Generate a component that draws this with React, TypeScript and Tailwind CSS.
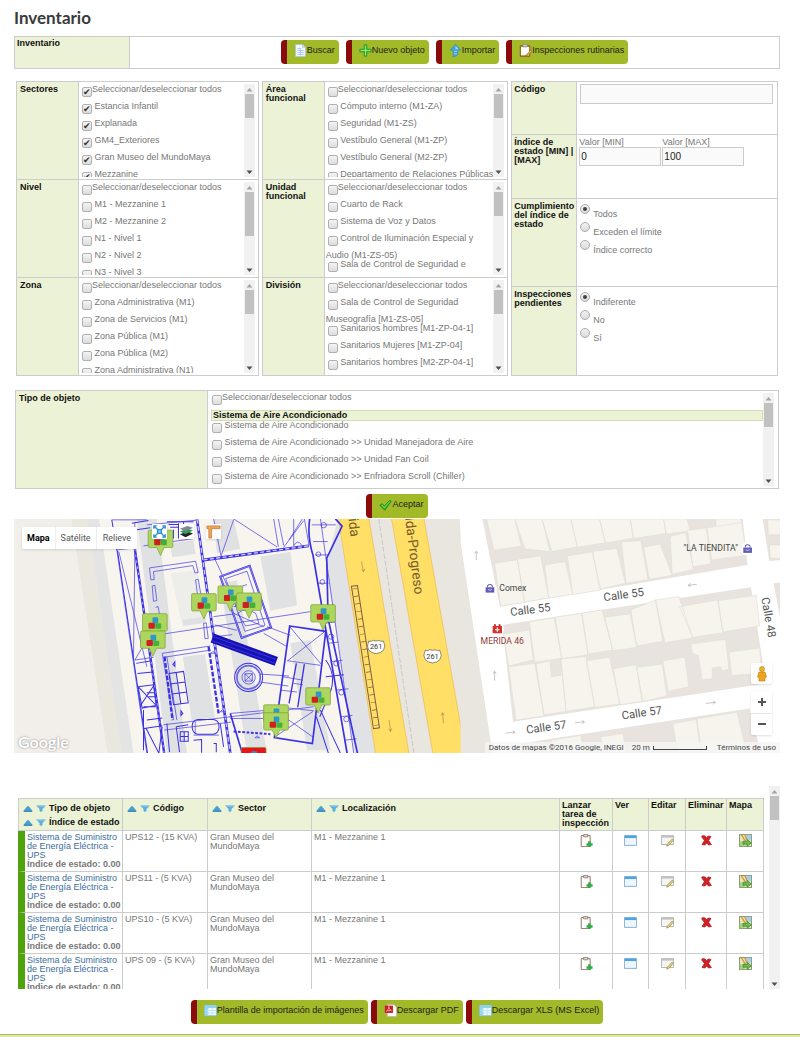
// src/pages/Inventario.tsx
import { ReactNode } from 'react';

interface FilterProps {
  name: string;
  title: string;
  items: string[];
  checked?: boolean;
  tallThumb?: boolean;
}

const leftFilters: FilterProps[] = [
  {
    name: 'sectores',
    title: 'Sectores',
    checked: true,
    items: ['Estancia Infantil', 'Explanada', 'GM4_Exteriores', 'Gran Museo del MundoMaya', 'Mezzanine'],
  },
  {
    name: 'nivel',
    title: 'Nivel',
    tallThumb: true,
    items: ['M1 - Mezzanine 1', 'M2 - Mezzanine 2', 'N1 - Nivel 1', 'N2 - Nivel 2', 'N3 - Nivel 3'],
  },
  {
    name: 'zona',
    title: 'Zona',
    items: [
      'Zona Administrativa (M1)',
      'Zona de Servicios (M1)',
      'Zona Pública (M1)',
      'Zona Pública (M2)',
      'Zona Administrativa (N1)',
    ],
  },
];

const middleFilters: FilterProps[] = [
  {
    name: 'area',
    title: 'Área funcional',
    items: [
      'Cómputo interno (M1-ZA)',
      'Seguridad (M1-ZS)',
      'Vestíbulo General (M1-ZP)',
      'Vestíbulo General (M2-ZP)',
      'Departamento de Relaciones Públicas',
    ],
  },
  {
    name: 'unidad',
    title: 'Unidad funcional',
    items: [
      'Cuarto de Rack',
      'Sistema de Voz y Datos',
      'Control de Iluminación Especial y Audio (M1-ZS-05)',
      'Sala de Control de Seguridad e',
    ],
  },
  {
    name: 'division',
    title: 'División',
    items: [
      'Sala de Control de Seguridad Museografía [M1-ZS-05]',
      'Sanitarios hombres [M1-ZP-04-1]',
      'Sanitarios Mujeres [M1-ZP-04]',
      'Sanitarios hombres [M2-ZP-04-1]',
    ],
  },
];

const tipos = [
  'Sistema de Aire Acondicionado',
  'Sistema de Aire Acondicionado >> Unidad Manejadora de Aire',
  'Sistema de Aire Acondicionado >> Unidad Fan Coil',
  'Sistema de Aire Acondicionado >> Enfriadora Scroll (Chiller)',
];

const codigos = ['UPS12 - (15 KVA)', 'UPS11 - (5 KVA)', 'UPS10 - (5 KVA)', 'UPS 09 - (5 KVA)'];

/* ---------- Iconos ---------- */

const Icon = ({ children }: { children: ReactNode }) => (
  <svg className="w-[13px] h-[13px] shrink-0" viewBox="0 0 16 16" aria-hidden="true">
    {children}
  </svg>
);

const PageIcon = () => (
  <Icon>
    <path d="M2 .5h8.500l3.500 3.500v11.500h-12z" fill="#f4f9ff" stroke="#a9c4e0" />
    <path d="M10.500.5v3.500h3.500" fill="#cfe2f5" stroke="#a9c4e0" />
    <path d="M4 5.500h5M4 8h8M4 10.500h8M4 13h8M8 6v8" stroke="#9fc3e6" />
  </Icon>
);

const PlusIcon = () => (
  <Icon>
    <path d="M6.500 1h3v5.500H15v3H9.500V15h-3V9.500H1v-3h5.500z" fill="#4fd04a" stroke="#1d8f22" />
    <path d="M8 2v12M2 8h12" stroke="#9bf08d" />
  </Icon>
);

const ImportIcon = () => (
  <Icon>
    <path d="M8 .5l6.500 7H11V11c0 2-1 3-3 4.500H4.500C6 13 5 12 5 10V7.500H1.500z" fill="#3fa4dd" stroke="#3f8fb8" />
    <path d="M8 2l4 4.500H8z" fill="#9bdcf8" />
    <path d="M6 9h4M6 12h4" stroke="#a8def2" />
  </Icon>
);

const ClipIcon = () => (
  <Icon>
    <path d="M1.500 2h12v13.500h-12z" fill="#a9671c" stroke="#9a6420" />
    <path d="M2.500 3.500h10V14h-10z" fill="#fff" />
    <path d="M5 .5h5v3H5z" fill="#d6d6d6" stroke="#888" />
    <path d="M15 7l-6 6-1.500 2 2.500-.8L16 9z" fill="#e9b54a" stroke="#8b5a12" strokeWidth=".6" />
  </Icon>
);

const CheckIcon = () => (
  <Icon>
    <path d="M1 9l3-2 2.500 3L13 3l2 1-8 11z" fill="#36b52c" stroke="#1c8418" />
    <path d="M3.500 8.500l3 3.500L13 4.500" fill="none" stroke="#8be37a" />
  </Icon>
);

const SheetIcon = () => (
  <Icon>
    <path d="M.5 1.500h15v13H.5z" fill="#eefaff" stroke="#6fb6d8" />
    <path d="M1 2h14v3H1zM1 5h4v9H1z" fill="#8fd3ee" />
    <path d="M5 5v9M10 5v9M1 8h14M1 11h14" stroke="#b9e2f1" />
  </Icon>
);

const PdfIcon = () => (
  <Icon>
    <path d="M4 .5h8l3.500 3.500v11.500H4z" fill="#fff" stroke="#c9a9a9" />
    <path d="M1 2h10v9H1z" fill="#c81f24" />
    <path d="M3 9c2-2 3-4 3-6 0 3 1 4 3 5-2 0-4 0-6 1z" fill="none" stroke="#f3b4b4" />
  </Icon>
);

const InspectIcon = () => (
  <Icon>
    <path d="M1.500 2h11v13.500h-11z" fill="#fff" stroke="#7b5a45" />
    <path d="M4.500.5h5v3h-5z" fill="#e1dcd6" stroke="#8a7566" />
    <path d="M10 9h3v2.500h2.500v3H13V16h-3v-1.500H8v-3h2z" fill="#2fae46" />
  </Icon>
);

const ViewIcon = () => (
  <Icon>
    <path d="M.5 2h15v12H.5z" fill="#eef5fc" stroke="#6f9fc8" />
    <path d="M1 2h14v3H1z" fill="#4fa3e0" />
  </Icon>
);

const EditIcon = () => (
  <Icon>
    <path d="M.5 2h15v11H.5z" fill="#f5f5f5" stroke="#a5a5a5" />
    <path d="M1 2h14v2.500H1z" fill="#c4c4c4" />
    <path d="M14 6l1.500 1.500-6 6.500-2.500 1 .7-2.500z" fill="#e8d567" stroke="#84743a" strokeWidth=".7" />
  </Icon>
);

const DeleteIcon = () => (
  <Icon>
    <path d="M3 2l3.500.5L8 5l2-2.500L13.500 3 10.500 8l3.500 5-3.500.5L8 11l-2 2.500L2.500 13 5.500 8 2 3.500z" fill="#cf2127" stroke="#b01a1c" />
  </Icon>
);

const MapIcon = () => (
  <Icon>
    <path d="M.5.5h15v15H.5z" fill="#e7e3bd" stroke="#5c7f4a" />
    <path d="M8 1h7v6H8z" fill="#a9cdec" />
    <path d="M1 9h6v6H1z" fill="#a8cf7c" />
    <path d="M3 1l5 8M7 1l3 6" stroke="#e0952c" strokeWidth="1.500" />
    <path d="M5 9h5V6.500l5 4.500-5 4v-2.500H5z" fill="#6dbb4e" stroke="#3f8a2e" />
  </Icon>
);

const SortIcons = () => (
  <svg className="w-[23px] h-[7px] shrink-0" viewBox="0 0 23 7" aria-hidden="true">
    <path d="M0 6.500L4 1.500Q5 .5 6 1.500L10 6.500z" fill="#4a9fd0" />
    <path d="M1 6.300h8" stroke="#2a7cb4" />
    <path d="M13 .5H23L19.500 4V6L18 7 16.500 6V4z" fill="#5db0dc" />
    <path d="M14 1h8" stroke="#8fcbea" />
  </svg>
);

/* ---------- Controles ---------- */

const ActionButton = ({ icon, children }: { icon: ReactNode; children: ReactNode }) => (
  <button
    type="button"
    className="flex items-start h-6 pt-1 pl-[7px] pr-1 rounded-[4px] border-l-[6px] border-[#8b0a0a] bg-[#a2b928] text-[9px] leading-[13px] text-[#222] whitespace-nowrap"
  >
    {icon}
    {children}
  </button>
);

const Check = ({ label, defaultChecked = false }: { label: string; defaultChecked?: boolean }) => (
  <label className="block">
    <input
      type="checkbox"
      defaultChecked={defaultChecked}
      className="appearance-none inline-block align-top w-[10px] h-[10px] mt-[2px] mb-[5px] ml-[2px] rounded-[2px] border border-[#b0b0b0] bg-linear-to-b from-[#f4f4f4] to-[#dcdcdc] checked:before:block checked:before:content-['✔'] checked:before:text-[9px] checked:before:leading-[8px] checked:before:text-[#333]"
    />
    {label}
  </label>
);

const ScrollBar = ({ tall = false }: { tall?: boolean }) => (
  <div className="flex flex-col items-center w-[11px] shrink-0 bg-[#f1f1f1]" aria-hidden="true">
    <svg className="w-[7px] h-[10px]" viewBox="0 0 7 10">
      <path d="M.5 7.500L3.500 4l3 3.500z" fill="#a3a3a3" />
    </svg>
    <div className={`w-[9px] bg-[#c1c1c1] ${tall ? 'h-11' : 'h-6'}`} />
    <svg className="w-[7px] h-[10px] mt-auto" viewBox="0 0 7 10">
      <path d="M.5 3.500L3.500 7l3-3.500z" fill="#505050" />
    </svg>
  </div>
);

const FilterBox = ({ title, items, checked, tallThumb }: FilterProps) => (
  <fieldset className="grid grid-cols-[62px_1fr] border-b border-[#ccc]">
    <div className="px-[3px] pt-[3px] bg-[#ecf2d5] border-r border-[#ccc] font-bold text-[#111]">{title}</div>
    <div className="flex h-[97px] pt-[2px] pb-[2px] pl-[1px] pr-[3px]">
      <div className="flex-1 min-w-0 overflow-hidden pt-[1px] [&>label:nth-child(6)]:whitespace-nowrap">
        <Check label="Seleccionar/deseleccionar todos" defaultChecked={checked} />
        {items.map((item) => (
          <Check key={item} label={` ${item}`} defaultChecked={checked} />
        ))}
      </div>
      <ScrollBar tall={tallThumb} />
    </div>
  </fieldset>
);

const RadioGroup = ({ name, options }: { name: string; options: string[] }) => (
  <div className="pt-[5px] pl-[3px]">
    {options.map((option, i) => (
      <label key={option} className="flex items-start gap-[3px] h-[18px]">
        <input
          type="radio"
          name={name}
          defaultChecked={i === 0}
          className="appearance-none flex items-center justify-center w-[10px] h-[10px] rounded-full border border-[#aaa] bg-linear-to-b from-[#f2f2f2] to-[#dcdcdc] checked:before:block checked:before:w-1 checked:before:h-1 checked:before:rounded-full checked:before:bg-[#444]"
        />
        <span className="pt-[6px]">{option}</span>
      </label>
    ))}
  </div>
);

const SideLabel = ({ children }: { children: ReactNode }) => (
  <div className="pl-[2px] pt-[3px] bg-[#ecf2d5] border-r border-[#ccc] font-bold text-[#111]">{children}</div>
);

/* ---------- Mapa ---------- */

const pins = [
  [444, 60], [574, 250], [653, 227], [709, 248], [427, 310], [421, 362],
  [931, 283], [916, 532], [790, 583], [790, 607],
];

const Pin = ({ x, y, color = '#add65c' }: { x: number; y: number; color?: string }) => (
  <g transform={`translate(${x} ${y})`}>
    <path d="M4 1h66q4 0 4 4v44q0 4-4 4H48L37 77 26 53H4q-4 0-4-4V5q0-4 4-4z" fill={color} stroke="#7c9a3e" strokeWidth="2" />
    <rect x="30" y="12" width="17" height="18" rx="3" fill="#3098c8" />
    <rect x="18" y="28" width="19" height="18" rx="3" fill="#cf2020" />
    <rect x="38" y="30" width="18" height="16" rx="3" fill="#42b23a" />
  </g>
);

const Shield = ({ x, y }: { x: number; y: number }) => (
  <g transform={`translate(${x} ${y})`}>
    <path d="M-22-17q8 3 14-2 8 4 16 0 6 5 14 2 8 16 0 28-8 8-22 10-14-2-22-10-8-12 0-28z" fill="#fff" stroke="#555" strokeWidth="2" />
    <text y="8" textAnchor="middle" fontSize="22" fill="#333">261</text>
  </g>
);

const Bag = ({ x, y, color }: { x: number; y: number; color: string }) => (
  <g transform={`translate(${x} ${y})`}>
    <circle r="20" fill="#fff" />
    <path d="M-13-4h26v16h-26z" fill={color} />
    <path d="M-7-4v-5q7-7 14 0v5" fill="none" stroke={color} strokeWidth="3" />
    <path d="M-6 2q6 6 12 0" fill="none" stroke="#fff" strokeWidth="2" />
  </g>
);

const MapDrawing = () => (
  <svg
    className="block w-full h-[234px]"
    viewBox="42 27 2295 702"
    preserveAspectRatio="xMidYMid slice"
    fontFamily="Roboto, sans-serif"
    role="img"
    aria-label="Mapa"
  >
    <rect x="0" y="0" width="2400" height="760" fill="#f2efea" />
    <path d="M214 27H290L400 729H322z" fill="#eae7df" />
    <path d="M262 27H297L400 729H365z" fill="#e4e4e5" />
    <path d="M297 27H1010L1130 729H400z" fill="#f8f5ef" />

    {/* Edificios */}
    <g fill="#e0e1e3">
      <path d="M410 27h60l90 702h-60zM510 100l70-8 6 40-70 10zM540 290l70-12 8 60-70 10z" />
      <path d="M548 440l66-8 30 190-70 8zM640 27h60l20 90-70 12zM780 140l90-14 20 160-80 16z" />
      <path d="M660 220l50-8 90 517h-60zM870 400l60-10 60 330h-70z" />
      <path d="M985 170q50-30 60-90l90 649h-60z" />
    </g>
    <path d="M512 190l80-10 20 140-70 10z" fill="#edeeea" />

    {/* Carretera */}
    <path d="M1100 27H1380L1475 729H1080z" fill="#e8e6df" />
    <path d="M978 170q20-90 35-143l110 702h-60z" fill="#e0e2e5" />
    <g fill="#ffdf66" stroke="#edb64d" strokeWidth="2">
      <path d="M1013 20H1104L1226 735H1126z" />
      <path d="M1172 20H1269L1396 735H1298z" />
    </g>
    <path d="M1135 27L1240 729" stroke="#b9b9b6" strokeWidth="2" strokeDasharray="16 5" />

    {/* Manzanas */}
    <g transform="translate(1380)">
      <path d="M-2 27H960V729H95L0 100z" fill="#fff" />
      <path d="M-2 27L0 100 95 729H0z" fill="#e8e6df" />
      <path d="M65 27H845L860 165 118 290zM125 345L870 232 915 520 157 635zM180 700L865 595 900 729H186zM905 27H960V150L925 153zM938 220l22-3v120z" fill="#e8e3de" />
      <g fill="#f6f4ed" stroke="#e2dfd6" strokeWidth="2">
        <path d="M78 27h84l20 82-82 12zM162 27h82l24 98-75-8zM244 27h86l20 84-76 14zM330 27h86l18 72-84 13zM416 27h92l10 58-84 14zM508 27h100l8 44-98 15zM608 27h70l10 36-72 10zM765 27h76v20l-76 14z" />
        <path d="M102 160l68-10 22 128-72 10zM170 148l70-10 24 126-72 12zM252 165l62-10 22 98-72 12zM320 138l74-12 26 114-84 14zM396 124l72-8 26 104-78 18zM482 96l58-4 22 118-66 10zM548 112l50-10 36 94-68 12zM628 80l46-12 24 110-64 16zM680 62l56-8 14 108-54 8zM738 54l104-16 16 98-106 14z" />
        <path d="M128 372l78-12 12 90-74 18zM206 335l74-12 24 122-82 12zM284 322l78-12 20 124-80 12zM364 310l60-10 32 120-74 12zM432 322l76-10 20 100-72 10zM510 300l74-30 22 124-78 14zM584 270l70-10 42 124-84 14zM656 290l114-20 16 98-90 14zM772 272l114-16 10 92-110 18z" />
        <path d="M144 470l78-10 28 158-84 12zM226 462l42-10 4 48 28-4v-52l16 160-66 10zM300 446l76-6 26 150-86 14zM376 452l70-10 32 140-76 10zM458 476l68-12 18 110-68 10zM528 472l76-10 14 96-72 16zM606 452l66-10 12 88-62 14zM690 402l104-14 10 90-20 4-6-12-24 4v32l-30 4-12-74-18-6zM804 426l92-12 6 76-90 6z" />
        <path d="M270 690l90-14 12 53H280zM420 680l66-10 12 59h-70zM636 640l70-12 14 101h-70zM708 626l120-20 30 123H722zM920 30h40v45h-38zM925 105h35v40h-32z" />
      </g>
      <g stroke="#aaa" strokeWidth="2" fill="none">
        <path d="M47 150v-26m-5 7l5-7 5 7M102 512v-28m-5 7l5-7 5 7M708 223l-26 3m7-6l-7 6 8 4M735 580l28-3m-7-4l7 4-6 6M343 638l28-3m-7-4l7 4-6 6M135 669l28-3m-7-4l7 4-6 6" />
      </g>
      <g fill="#555" fontSize="34">
        <text transform="translate(150 318) rotate(-7)">Calle 55</text>
        <text transform="translate(430 274) rotate(-8)">Calle 55</text>
        <text transform="translate(198 671) rotate(-8)">Calle 57</text>
        <text transform="translate(484 628) rotate(-8)">Calle 57</text>
        <text transform="translate(901 264) rotate(80)">Calle 48</text>
      </g>
      <Bag x={88} y={236} color="#625cb5" />
      <Bag x={860} y={117} color="#625cb5" />
      <circle cx="110" cy="357" r="20" fill="#fff" />
      <path d="M96 348h28v22H96zM100 343h6v6h-6zM114 343h6v6h-6z" fill="#d0322c" />
      <path d="M110 352v14M103 359h14" stroke="#fff" strokeWidth="3" />
      <g fontSize="26">
        <text x="116" y="244" fill="#444">Comex</text>
        <text x="60" y="402" fill="#8e3b3b">MERIDA 46</text>
        <text x="668" y="124" fill="#444">"LA TIENDITA"</text>
      </g>
    </g>

    <g fill="#765c2b" fontSize="41">
      <text transform="translate(1214 24) rotate(83)">ida-Progreso</text>
      <text transform="translate(1044 27) rotate(83)">ida</text>
    </g>
    <path d="M1083 155l6 30m-6-7l6 8 4-9M1166 630l4 34m-5-8l5 8 4-9M1329 640l-3-32m-4 8l4-8 5 8" fill="none" stroke="#a58d45" strokeWidth="2" />

    {/* Plano del recinto */}
    <g fill="none" stroke="#3a30e6" strokeWidth="2">
      <path d="M335 30H440M350 120l52-6M350 120L440 729M356 125L440 470M404 36v80M404 130l-4 310M404 450l70-120M404 450l56-8M440 45l150-14M430 108l150-22" />
      <path d="M335 30l15 90M352 122l90 607M395 40l50-8M410 60l40-6M500 36h80M505 44h70M510 52h66M520 60v26M535 40v46M550 36v46" strokeWidth="3" />
      <path d="M404 116L492 729" strokeWidth="7" />
      <path d="M404 116L492 729" stroke="#aaa7f2" strokeWidth="3" strokeDasharray="8 10" />
      <path d="M448 174l138-20 8 34-10 1-6-22-118 18 2 24-10 1zM456 228l8-2 6 46-10 2zM466 292l8-2 4 24M586 210l8-2 8 46-10 2zM610 340l8-1 6 46-10 1z" />
      <path d="M590 27L690 729" strokeWidth="8" />
      <path d="M590 27L690 729" stroke="#c9c7f8" strokeWidth="4" strokeDasharray="14 8" />
      <path d="M490 372L930 305M640 320l60-8M644 345l66 16M646 380l50-6" />
      <path d="M486 430l144-22M490 442l142-22M486 430l34 200M500 440l30 190" />
      <path d="M493 440l24 190M625 410l30 200" strokeWidth="7" strokeDasharray="14 5" />
      <path d="M506 490l44-6 14 94-44 6zM528 488l14 94M510 522l44-6M516 552l44-6M524 455v14l-6-6zM542 602v14l6-6z" strokeWidth="3" />
      <path d="M408 460l46-8M412 490l46-4M414 530l46-6 8 62-42 8zM416 532l50 52M460 528l-40 60M430 600v120M440 630l46-6M432 655l54-8M438 655l38 74M486 650l-10 79M430 590h38M440 548h26M445 560h24" strokeWidth="3" />
      <path d="M490 644L940 590M492 660l200-24" />
      <path d="M528 650l36-6M528 650l10 76M540 665h24v28h-24zM540 679h24M552 665v28M580 690l24-2v40M640 700h8v26M660 640l10 70M500 640l8 86" strokeWidth="3" />
      <rect x="576" y="628" width="80" height="44" rx="18" strokeWidth="3" />
      <path d="M580 675h76M585 635v36" />

      <path d="M610 150L925 108" strokeWidth="9" />
      <path d="M610 150L925 108" stroke="#cfccfa" strokeWidth="4" strokeDasharray="12 7" />
      <path d="M640 27l22 110M662 140L700 30M700 27l130 84M820 27l14 84M834 27l16 80M850 112l60-80M866 90l40-63M880 27v80M912 27l14 80M880 108q12-22 24-2M645 150l70 150" />
      <path d="M660 200L748 168 812 352 724 384z" strokeWidth="6" />
      <path d="M660 200L748 168 812 352 724 384z" stroke="#aaa7f2" />
      <path d="M676 206L740 184 794 346 734 364zM690 240l50-16M700 290l60-14M712 310q24-20 54 0l10 30-40 8z" />
      <path d="M700 310L790 350M800 350l70 26M790 370l70 40" />

      <path d="M636 384L828 454" stroke="#1712b5" strokeWidth="28" />
      <path d="M640 380L826 448M636 392L824 460" stroke="#4b45ee" />

      <circle cx="745" cy="502" r="42" strokeWidth="3" />
      <circle cx="745" cy="502" r="35" strokeWidth="5" stroke="#6a64e6" />
      <circle cx="745" cy="502" r="20" />
      <path d="M734 491h22v22h-22zM734 491l22 22M756 491l-22 22M780 492l86 6M780 516l84 12" />

      <path d="M868 348L976 364 936 700 822 682z" strokeWidth="5" />
      <path d="M868 350L962 462M974 364L862 452M860 452l100 14M846 500l60 10M840 540l50 6M830 590l110 12M830 605l108 76M938 604L824 680M880 520l28 4" />
      <path d="M888 460l-22 120M912 462l-20 130" strokeWidth="4" />
      <path d="M976 450q30 40 16 90l-34 80M976 500l54-6M960 600l60 129M948 620l36 109" strokeWidth="3" />

      <path d="M928 27q-8 50 10 110L1040 729M1005 27l20 22-46 96 4 180 88 404" strokeWidth="5" />
      <path d="M960 27L1060 729" />
      <path d="M934 45h72M938 95h44M944 135h40M950 220h34M950 300h34M970 340l34-4M984 400l30-4M990 455l36-4M1006 540l38-4M1020 620l36-4M1034 690l34-4" />
      <circle cx="970" cy="46" r="8" />
      <circle cx="954" cy="133" r="7" />
      <circle cx="966" cy="216" r="7" />
      <circle cx="992" cy="380" r="8" />
      <circle cx="1008" cy="460" r="8" />
      <circle cx="1023" cy="547" r="8" />
      <circle cx="1038" cy="627" r="8" />
      <path d="M690 610L726 729" strokeWidth="5" />
      <path d="M690 610l140-12M690 625h140M632 430h14l-8-6zM660 605h14l-8-6zM764 683h14l-8-6z" />
      <path d="M700 664l110 8" strokeWidth="6" strokeDasharray="8 5" />
    </g>
    <g fill="none" stroke="#7c5a4b" strokeWidth="3">
      <path d="M1053 229l18-2 66 426-18 3z" />
      <path d="M1064 235l66 420" strokeWidth="14" strokeDasharray="2 21" />
    </g>
    <Shield x={1127} y={410} />
    <Shield x={1296} y={438} />
    {pins.map(([x, y]) => (
      <Pin key={`${x}-${y}`} x={x} y={y} />
    ))}
    <Pin x={723} y={711} color="#e81616" />
  </svg>
);

const MapPanel = () => (
  <div className="relative overflow-hidden font-[Roboto,sans-serif]">
    <MapDrawing />
    <div className="absolute left-2 top-2 flex h-[22px] rounded-[2px] bg-white shadow-sm text-[9px] text-[#565656] divide-x divide-[#eee]">
      <button type="button" className="px-[5px] font-bold text-black">Mapa</button>
      <button type="button" className="px-[5px]">Satélite</button>
      <button type="button" className="px-[6px]">Relieve</button>
    </div>
    <div className="absolute left-[138px] top-[5px] flex gap-3">
      <button type="button" aria-label="Ajustar vista" className="w-[15px] h-[15px] bg-white shadow">
        <svg viewBox="0 0 16 16" fill="none" stroke="#2d8fce" strokeWidth="1.500">
          <path d="M2 5V2h3M11 2h3v3M14 11v3h-3M5 14H2v-3M3 3l3 3M13 3l-3 3M13 13l-3-3M3 13l3-3" />
          <path d="M6 6h4v4H6z" fill="#8dcdf0" />
        </svg>
      </button>
      <button type="button" aria-label="Capas" className="w-[15px] h-[15px] bg-white shadow">
        <svg viewBox="0 0 16 16">
          <path d="M1 11l8-3 6 2-8 4z" fill="#222" />
          <path d="M1 8l8-3 6 2-8 4z" fill="#2c9c55" />
          <path d="M1 5l8-3 6 2-8 4z" fill="#7d8790" />
        </svg>
      </button>
      <button type="button" aria-label="Medir" className="w-[15px] h-[15px] bg-white shadow">
        <svg viewBox="0 0 16 16">
          <path d="M1 2h14v3H6v10H3V5H1z" fill="#eda558" stroke="#bd6b27" strokeWidth=".7" />
        </svg>
      </button>
    </div>
    <span className="absolute left-1 bottom-0 font-[Lato,sans-serif] text-[16px] leading-[22px] font-bold text-white [text-shadow:0_0_2px_#777]">
      Google
    </span>
    <button type="button" aria-label="Street View" className="absolute right-2 bottom-[69px] flex justify-center items-center w-[21px] h-[21px] rounded-[2px] bg-white shadow-sm">
      <svg className="w-[10px] h-4" viewBox="0 0 10 16">
        <circle cx="5" cy="3" r="2.500" fill="#f5b32c" stroke="#b9780d" strokeWidth=".6" />
        <path d="M2 6h6l1.500 5-1.500.5V15H2v-3.500L.5 11z" fill="#f0a51e" stroke="#b9780d" strokeWidth=".6" />
      </svg>
    </button>
    <div className="absolute right-2 bottom-[18px] flex flex-col w-[21px] h-[44px] rounded-[2px] bg-white shadow-sm divide-y divide-[#e6e6e6]">
      <button type="button" aria-label="Acercar" className="flex-1 flex justify-center items-center">
        <svg className="w-2 h-2" viewBox="0 0 8 8"><path d="M4 0v8M0 4h8" stroke="#555" strokeWidth="2" /></svg>
      </button>
      <button type="button" aria-label="Alejar" className="flex-1 flex justify-center items-center">
        <svg className="w-2 h-2" viewBox="0 0 8 8"><path d="M0 4h8" stroke="#555" strokeWidth="2" /></svg>
      </button>
    </div>
    <div className="absolute right-0 bottom-0 flex items-center h-[11px] px-1 bg-[#f5f5f5]/80 text-[8px] leading-[11px] text-[#444] whitespace-nowrap">
      <span>Datos de mapas ©2016 Google, INEGI</span>
      <span className="ml-2">20 m</span>
      <span className="ml-[3px] w-[54px] h-1 border border-t-0 border-[#444]" />
      <a href="#terminos" className="ml-[10px]">Términos de uso</a>
    </div>
  </div>
);

/* ---------- Tabla de resultados ---------- */

const ResultsTable = () => (
  <div className="flex justify-between h-[203px]">
    <div className="flex-1 overflow-hidden pt-3 pl-1 pr-[5px]">
      <table className="w-full table-fixed border-separate border-spacing-0 [&_th]:border-y [&_th]:border-r [&_td]:border-b [&_td]:border-r [&_th]:border-[#ccc] [&_td]:border-[#ccc] [&_th]:px-[2px] [&_td]:px-[2px] [&_th]:pt-[2px] [&_td]:pt-[2px]">
        <colgroup>
          <col className="w-[105px]" />
          <col className="w-[85px]" />
          <col className="w-[104px]" />
          <col />
          <col className="w-[53px]" />
          <col className="w-[36px]" />
          <col className="w-[37px]" />
          <col className="w-[41px]" />
          <col className="w-[37px]" />
        </colgroup>
        <thead>
          <tr className="h-[33px] bg-[#ecf2d5] text-left align-top text-[#111]">
            <th className="border-l leading-[14px]">
              <div className="flex items-center gap-[3px] pl-[2px]"><SortIcons />Tipo de objeto</div>
              <div className="flex items-center gap-[3px] pl-[2px] whitespace-nowrap"><SortIcons />Índice de estado</div>
            </th>
            {['Código', 'Sector', 'Localización'].map((title) => (
              <th key={title} className="leading-[14px]">
                <div className="flex items-center gap-[3px] pl-[2px]"><SortIcons />{title}</div>
              </th>
            ))}
            <th>Lanzar tarea de inspección</th>
            <th>Ver</th>
            <th>Editar</th>
            <th>Eliminar</th>
            <th>Mapa</th>
          </tr>
        </thead>
        <tbody>
          {codigos.map((codigo) => (
            <tr key={codigo} className="h-[41px] align-top">
              <td className="border-l-[7px] border-l-[#4fa30c]!">
                <a href="#objeto" className="text-[#3c6e9c]">Sistema de Suministro de Energía Eléctrica - UPS</a>
                <div className="font-bold whitespace-nowrap">Índice de estado: 0.00</div>
              </td>
              <td>{codigo}</td>
              <td>Gran Museo del MundoMaya</td>
              <td>M1 - Mezzanine 1</td>
              <td><button type="button" aria-label="Lanzar tarea" className="block mx-auto mt-[1px]"><InspectIcon /></button></td>
              <td><button type="button" aria-label="Ver" className="block mx-auto mt-[1px]"><ViewIcon /></button></td>
              <td><button type="button" aria-label="Editar" className="block mx-auto mt-[1px]"><EditIcon /></button></td>
              <td><button type="button" aria-label="Eliminar" className="block mx-auto mt-[1px]"><DeleteIcon /></button></td>
              <td><button type="button" aria-label="Mapa" className="block mx-auto mt-[1px]"><MapIcon /></button></td>
            </tr>
          ))}
        </tbody>
      </table>
    </div>
    <ScrollBar />
  </div>
);

const App = () => {
  return (
    <div className="bg-white font-['Liberation_Sans',Arial,sans-serif] text-[9px] leading-[9px] text-[#777]">
      <main className="pl-[14px] pr-5">
        <h1 className="h-9 pt-2 font-[Lato,sans-serif] text-[17px] leading-5 font-bold text-[#3a3a3a]">Inventario</h1>

        <div className="grid grid-cols-[115px_1fr] h-[33px] border border-[#ccc]">
          <div className="px-[2px] pt-[2px] bg-[#ecf2d5] border-r border-[#ccc] font-bold text-[#111]">Inventario</div>
          <div className="flex justify-center gap-[7px] pt-[3px]">
            <ActionButton icon={<PageIcon />}>Buscar</ActionButton>
            <ActionButton icon={<PlusIcon />}>Nuevo objeto</ActionButton>
            <ActionButton icon={<ImportIcon />}>Importar</ActionButton>
            <ActionButton icon={<ClipIcon />}>Inspecciones rutinarias</ActionButton>
          </div>
        </div>

        {/* Filtros */}
        <form className="grid grid-cols-[244fr_245fr_268fr] gap-x-[3px] mt-3 mx-[2px]">
          <div className="border border-b-0 border-[#ccc]">
            {leftFilters.map((f) => <FilterBox key={f.name} {...f} />)}
          </div>
          <div className="border border-b-0 border-[#ccc]">
            {middleFilters.map((f) => <FilterBox key={f.name} {...f} />)}
          </div>
          <div className="grid grid-cols-[65px_1fr] grid-rows-[54fr_64fr_89fr_89fr] border border-[#ccc] [&>*:nth-child(-n+6)]:border-b [&>*]:border-[#ccc]">
            <SideLabel><label htmlFor="codigo">Código</label></SideLabel>
            <div className="pt-[2px] pl-[3px] pr-1">
              <input id="codigo" type="text" className="block w-full h-5 px-1 border border-[#ccc] bg-[#fafafa] text-[10px] text-[#222]" />
            </div>
            <SideLabel>Índice de estado [MIN] | [MAX]</SideLabel>
            <div className="flex gap-[1px] pt-[3px] pl-[2px]">
              <label className="w-[82px]">
                Valor [MIN]
                <input type="text" defaultValue="0" className="block w-full h-[19px] px-[1px] border border-[#ccc] bg-[#fafafa] font-[Arimo,'Liberation_Sans',sans-serif] text-[10px] text-[#222]" />
              </label>
              <label className="w-[82px]">
                Valor [MAX]
                <input type="text" defaultValue="100" className="block w-full h-[19px] px-[1px] border border-[#ccc] bg-[#fafafa] font-[Arimo,'Liberation_Sans',sans-serif] text-[10px] text-[#222]" />
              </label>
            </div>
            <SideLabel>Cumplimiento del índice de estado</SideLabel>
            <RadioGroup name="cumplimiento" options={['Todos', 'Exceden el límite', 'Índice correcto']} />
            <SideLabel>Inspecciones pendientes</SideLabel>
            <RadioGroup name="pendientes" options={['Indiferente', 'No', 'Sí']} />
          </div>
        </form>

        <div className="grid grid-cols-[192px_1fr] grid-rows-[minmax(0,1fr)] h-[99px] mt-[14px] mx-[1px] border border-[#ccc]">
          <div className="px-[3px] pt-[3px] bg-[#ecf2d5] border-r border-[#ccc] font-bold text-[#111]">Tipo de objeto</div>
          <div className="flex pt-[2px] pb-[2px] pl-[2px] pr-1">
            <div className="flex-1 overflow-hidden">
              <Check label="Seleccionar/deseleccionar todos" />
              <div className="ml-[1px] px-[1px] bg-[#ecf2d5] border border-[#d5dcb8] font-bold text-[#111]">
                Sistema de Aire Acondicionado
              </div>
              {tipos.map((tipo) => <Check key={tipo} label={` ${tipo}`} />)}
            </div>
            <ScrollBar />
          </div>
        </div>

        <div className="flex justify-center pt-[5px] pb-[1px]">
          <ActionButton icon={<CheckIcon />}>Aceptar</ActionButton>
        </div>

        <MapPanel />

        <div className="mt-[33px]">
          <ResultsTable />
        </div>

        <div className="flex justify-center gap-[3px] mt-[11px]">
          <ActionButton icon={<SheetIcon />}>Plantilla de importación de imágenes</ActionButton>
          <ActionButton icon={<PdfIcon />}>Descargar PDF</ActionButton>
          <ActionButton icon={<SheetIcon />}>Descargar XLS (MS Excel)</ActionButton>
        </div>
      </main>
      <footer className="mt-[10px] h-[3px] border-t border-[#a9bd55] bg-[#dbe6a8]" />
    </div>
  );
};

export default App;
